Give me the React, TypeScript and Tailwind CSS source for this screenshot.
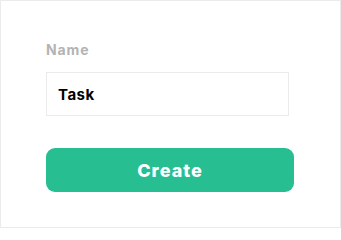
export default function App() {
  return (
    <div
      className="w-[341px] h-[228px] border border-[#ebebeb] bg-white pl-[45px] pt-[39px]"
      style={{ fontFamily: 'Inter, "Liberation Sans", sans-serif' }}
    >
      <form className="flex flex-col" onSubmit={(e) => e.preventDefault()}>
        <label className="text-[14px] leading-[20px] font-bold tracking-[0.9px] text-[#b3b3b3]">Name</label>
        <input
          defaultValue="Task"
          className="mt-[12px] w-[243px] h-[44px] border border-[#ebebeb] px-[11px] text-[15px] font-bold tracking-[0.5px] text-black outline-none"
        />
        <button
          type="submit"
          className="mt-[32px] w-[248px] h-[44px] rounded-[9px] bg-[#27be91] text-white text-[18px] font-extrabold tracking-[1px]"
        >
          Create
        </button>
      </form>
    </div>
  );
}
